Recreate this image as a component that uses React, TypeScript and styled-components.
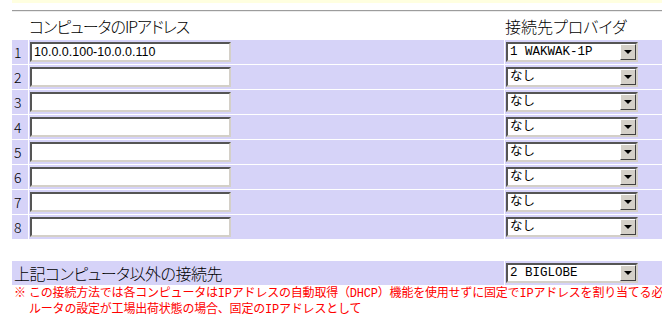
import { FC } from "react";
import styled, { createGlobalStyle } from "styled-components";

const GlobalStyle = createGlobalStyle`
  html, body {
    margin: 0;
    padding: 0;
    background: #ffffff;
    overflow: hidden;
  }

  body {
    font-family: "Noto Sans CJK JP", "Liberation Sans", sans-serif;
    color: #000000;
  }

  * {
    box-sizing: border-box;
  }
`;

const LAVENDER = "#d6d3f8";

const hosts = ["10.0.0.100-10.0.0.110", "", "", "", "", "", "", ""];
const providers = ["1 WAKWAK-1P", "なし", "なし", "なし", "なし", "なし", "なし", "なし"];

interface ComboProps {
  value: string;
}

const Combo: FC<ComboProps> = ({ value }) => {
  return (
    <ComboBox>
      <ComboText>{value}</ComboText>
      <ComboButton>
        <Arrow />
      </ComboButton>
    </ComboBox>
  );
};

const App: FC = () => {
  return (
    <Page>
      <GlobalStyle />
      <TopBand />
      <Rule />

      <HeaderRow>
        <span />
        <HeaderText $tight>コンピュータのIPアドレス</HeaderText>
        <HeaderText>接続先プロバイダ</HeaderText>
      </HeaderRow>

      <Table>
        {hosts.map((host, i) => (
          <Row key={i}>
            <NumCell>{i + 1}</NumCell>
            <Cell>
              <TextInput type="text" defaultValue={host} />
            </Cell>
            <Cell>
              <Combo value={providers[i]} />
            </Cell>
          </Row>
        ))}
      </Table>

      <OtherRow>
        <OtherLabel>上記コンピュータ以外の接続先</OtherLabel>
        <Cell>
          <Combo value="2 BIGLOBE" />
        </Cell>
      </OtherRow>

      <Note>
        <NoteLine>
          <Mark>※</Mark>
          この接続方法では各コンピュータはIPアドレスの自動取得（DHCP）機能を使用せずに固定でIPアドレスを割り当てる必
        </NoteLine>
        <NoteLine $indent>
          ルータの設定が工場出荷状態の場合、固定のIPアドレスとして
        </NoteLine>
      </Note>
    </Page>
  );
};

const Page = styled.div`
  width: 662px;
  padding-left: 12px;
`;

const TopBand = styled.div`
  height: 3px;
  background: #ffffe0;
`;

const Rule = styled.div`
  margin-top: 7px;
  border-top: 1px solid #9c9c9c;
  border-bottom: 1px solid #ececec;
`;

const HeaderRow = styled.div`
  display: grid;
  grid-template-columns: 16px 475px 1fr;
  column-gap: 1px;
  align-items: end;
  height: 28px;
  padding-bottom: 5px;
`;

const HeaderText = styled.span<{ $tight?: boolean }>`
  font-size: 16px;
  font-weight: 300;
  line-height: 18px;
  font-feature-settings: "palt";
  letter-spacing: ${(props) => (props.$tight ? "-1px" : "0")};
  white-space: nowrap;
`;

const Table = styled.div`
  display: flex;
  flex-direction: column;
  gap: 1px;
`;

const Row = styled.div`
  display: grid;
  grid-template-columns: 16px 475px 1fr;
  column-gap: 1px;
  height: 24px;
`;

const Cell = styled.div`
  display: flex;
  align-items: center;
  padding-left: 1px;
  background: ${LAVENDER};
`;

const NumCell = styled(Cell)`
  padding-left: 2px;
  font-size: 14px;
  font-weight: 300;
`;

const TextInput = styled.input`
  width: 201px;
  height: 20px;
  margin: 0;
  padding: 0 2px;
  border: 2px solid;
  border-color: #555555 #d4d0c8 #d4d0c8 #555555;
  background: #ffffff;
  font-family: "Liberation Sans", sans-serif;
  font-size: 12.5px;
  color: #000000;
  outline: none;
`;

const ComboBox = styled.div`
  display: flex;
  align-items: center;
  width: 132px;
  height: 20px;
  border: 2px solid;
  border-color: #555555 #d4d0c8 #d4d0c8 #555555;
  background: #ffffff;
`;

const ComboText = styled.span`
  flex: 1;
  padding-left: 2px;
  font-family: "Liberation Mono", "Noto Sans CJK JP", monospace;
  font-size: 12.5px;
  line-height: 16px;
  white-space: nowrap;
  overflow: hidden;
`;

const ComboButton = styled.span`
  display: flex;
  align-items: center;
  justify-content: center;
  width: 16px;
  height: 16px;
  background: #d4d0c8;
  border: 1px solid;
  border-color: #ffffff #404040 #404040 #ffffff;
`;

const Arrow = styled.span`
  width: 0;
  height: 0;
  border-left: 4px solid transparent;
  border-right: 4px solid transparent;
  border-top: 4px solid #000000;
`;

const OtherRow = styled.div`
  display: grid;
  grid-template-columns: 492px 1fr;
  column-gap: 1px;
  height: 22px;
  margin-top: 22px;
`;

const OtherLabel = styled.div`
  display: flex;
  align-items: center;
  padding-left: 2px;
  background: ${LAVENDER};
  font-size: 16px;
  font-weight: 300;
  font-feature-settings: "palt";
  letter-spacing: -0.5px;
  white-space: nowrap;
`;

const Note = styled.div`
  padding-top: 3px;
  color: #ff0000;
  font-size: 12px;
  line-height: 16px;
  overflow: hidden;
`;

const NoteLine = styled.div<{ $indent?: boolean }>`
  white-space: nowrap;
  padding-left: ${(props) => (props.$indent ? "17px" : "2px")};
  font-family: "Liberation Mono", "Noto Sans CJK JP", monospace;
  letter-spacing: -0.2px;
`;

const Mark = styled.span`
  display: inline-block;
  width: 15px;
`;

export default App;
